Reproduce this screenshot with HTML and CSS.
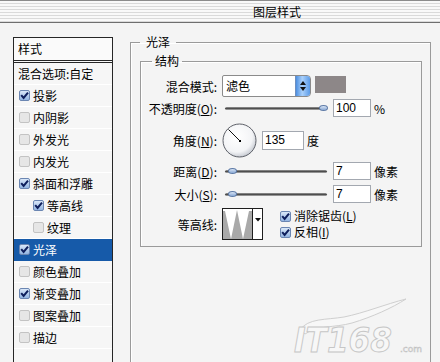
FILE: index.html
```html
<!DOCTYPE html>
<html lang="zh-CN">
<head>
    <meta charset="UTF-8">
    <title>图层样式</title>
    <link rel="stylesheet" href="styles.css">
</head>
<body>
    <div class="titlebar"><span class="title">图层样式</span></div>

    <div class="main">
        <!-- effect list -->
        <div class="list">
            <div class="list-head">样式</div>
            <div class="list-row">混合选项:自定</div>
            <div class="list-row"><span class="cb on"><svg viewBox="0 0 11 11"><path d="M2.2 5.2 L4.6 8 L9 2.6"/></svg></span>投影</div>
            <div class="list-row"><span class="cb"></span>内阴影</div>
            <div class="list-row"><span class="cb"></span>外发光</div>
            <div class="list-row"><span class="cb"></span>内发光</div>
            <div class="list-row"><span class="cb on"><svg viewBox="0 0 11 11"><path d="M2.2 5.2 L4.6 8 L9 2.6"/></svg></span>斜面和浮雕</div>
            <div class="list-row sub"><span class="cb on"><svg viewBox="0 0 11 11"><path d="M2.2 5.2 L4.6 8 L9 2.6"/></svg></span>等高线</div>
            <div class="list-row sub"><span class="cb"></span>纹理</div>
            <div class="list-row selected"><span class="cb on"><svg viewBox="0 0 11 11"><path d="M2.2 5.2 L4.6 8 L9 2.6"/></svg></span>光泽</div>
            <div class="list-row"><span class="cb"></span>颜色叠加</div>
            <div class="list-row"><span class="cb on"><svg viewBox="0 0 11 11"><path d="M2.2 5.2 L4.6 8 L9 2.6"/></svg></span>渐变叠加</div>
            <div class="list-row"><span class="cb"></span>图案叠加</div>
            <div class="list-row"><span class="cb"></span>描边</div>
        </div>

        <fieldset class="group outer">
            <legend>光泽</legend>
            <fieldset class="group inner">
                <legend>结构</legend>

                <div class="row row-mode">
                    <span class="lbl">混合模式:</span>
                    <div class="select">
                        <span class="select-val">滤色</span>
                        <span class="spin">
                            <svg width="8" height="14" viewBox="0 0 8 14"><path d="M4 2 L7 6 L1 6 Z M4 12 L7 8 L1 8 Z" fill="#111"/></svg>
                        </span>
                    </div>
                    <span class="swatch"></span>
                </div>

                <div class="row row-opacity">
                    <span class="lbl">不透明度(<u>O</u>):</span>
                    <div class="slider"><span class="thumb" style="left: 98px;"></span></div>
                    <span class="num">100</span>
                    <span class="unit">%</span>
                </div>

                <div class="row row-angle">
                    <span class="lbl">角度(<u>N</u>):</span>
                    <svg class="dial" width="35" height="35" viewBox="0 0 35 35">
                        <defs>
                            <radialGradient id="dialfill" cx="42%" cy="38%" r="65%">
                                <stop offset="0" stop-color="#ffffff"/>
                                <stop offset="0.72" stop-color="#f3f4f6"/>
                                <stop offset="1" stop-color="#c3c7cf"/>
                            </radialGradient>
                        </defs>
                        <circle cx="17.5" cy="17.5" r="16.5" fill="url(#dialfill)" stroke="#5d6068" stroke-width="1"/>
                        <line x1="18" y1="18" x2="6.5" y2="6.5" stroke="#111" stroke-width="1"/>
                        <rect x="17" y="17" width="2" height="2" fill="#000"/>
                    </svg>
                    <span class="num num-angle">135</span>
                    <span class="unit">度</span>
                </div>

                <div class="row row-dist">
                    <span class="lbl">距离(<u>D</u>):</span>
                    <div class="slider"><span class="thumb" style="left: 7px;"></span></div>
                    <span class="num">7</span>
                    <span class="unit">像素</span>
                </div>

                <div class="row row-size">
                    <span class="lbl">大小(<u>S</u>):</span>
                    <div class="slider"><span class="thumb" style="left: 7px;"></span></div>
                    <span class="num">7</span>
                    <span class="unit">像素</span>
                </div>

                <div class="row row-contour">
                    <span class="lbl">等高线:</span>
                    <div class="contour">
                        <svg class="curve" width="29" height="30" viewBox="0 0 29 30">
                            <rect width="29" height="30" fill="#fff"/>
                            <path d="M0 30 L0 2 L2 2 L8 30 L14 1 L20 30 L26 2 L29 2 L29 30 Z" fill="#a9a9a9"/>
                        </svg>
                        <span class="contour-arrow">
                            <svg width="6" height="4" viewBox="0 0 6 4"><path d="M0 0 L6 0 L3 3.5 Z" fill="#111"/></svg>
                        </span>
                    </div>
                    <div class="checks">
                        <div class="check"><span class="cb on"><svg viewBox="0 0 11 11"><path d="M2.2 5.2 L4.6 8 L9 2.6"/></svg></span>消除锯齿(<u>L</u>)</div>
                        <div class="check"><span class="cb on"><svg viewBox="0 0 11 11"><path d="M2.2 5.2 L4.6 8 L9 2.6"/></svg></span>反相(<u>I</u>)</div>
                    </div>
                </div>
            </fieldset>
        </fieldset>
    </div>

    <!-- watermark -->
    <svg class="watermark" width="142" height="60" viewBox="0 0 142 60">
        <path d="M10 32 C18 20 36 22 54 19 C74 15 96 6 116 1 C102 10 82 19 62 25 C44 30 28 27 15 36 Z" fill="#f7f7f7" stroke="#cfcfcf" stroke-width="1"/>
        <text x="4" y="54" class="wm-big" textLength="98" lengthAdjust="spacingAndGlyphs">IT168</text>
        <text x="110" y="54" class="wm-small">.com</text>
    </svg>
</body>
</html>
```

FILE: styles.css
```css
body {
    margin: 0;
    width: 440px;
    height: 362px;
    overflow: hidden;
    position: relative;
    background: #f4f4f4;
    font-family: "Noto Sans CJK SC", "Liberation Sans", sans-serif;
    font-size: 12px;
    color: #000;
}
.titlebar {
    height: 21px;
    line-height: 21px;
    padding-left: 253px;
    border-top: 1px solid #8c8c8c;
    border-bottom: 1px solid #6e6e6e;
    background: repeating-linear-gradient(to bottom, #f9f9f9 0, #f9f9f9 2px, #dadada 2px, #dadada 3px);
}
.main {
    display: flex;
    align-items: flex-start;
    padding: 11px 0 0 13px;
}

/* effect list */
.list {
    width: 98px;
    height: 340px;
    margin-top: 3px;
    border: 1px solid #262626;
    background: #f6f6f6;
    flex: none;
}
.list-head {
    height: 22px;
    line-height: 22px;
    padding-left: 4px;
    background: #fafafa;
    border-bottom: 3px double #262626;
}
.list-row {
    display: flex;
    align-items: center;
    height: 21px;
    padding-left: 5px;
    border-bottom: 1px solid #ffffff;
    white-space: nowrap;
}
.list-row:nth-child(2) {
    padding-left: 4px;
}
.list-row.sub {
    padding-left: 19px;
}
.list-row.selected {
    background: #165aa9;
    color: #fff;
    border-bottom-color: #165aa9;
}
.cb {
    width: 9px;
    height: 9px;
    margin-right: 3px;
    border: 1px solid #c3c3c3;
    border-radius: 2px;
    background: #e6e6e6;
    flex: none;
    display: flex;
}
.cb.on {
    border-color: #6b86b2;
    background: linear-gradient(to bottom, #d9e7f8, #93b5e2);
}
.cb svg {
    width: 11px;
    height: 11px;
    margin: -1px;
    fill: none;
    stroke: #0e1f5c;
    stroke-width: 2;
}

/* group boxes */
.group {
    margin: 0;
    padding: 0;
    border: 1px solid #9a9a9a;
    box-shadow: inset 1px 1px 0 #ffffff;
    min-width: 0;
}
.group legend {
    line-height: 16px;
    height: 16px;
}
.outer {
    box-sizing: border-box;
    width: 301px;
    height: 340px;
    margin-left: 17px;
}
.outer > legend {
    margin-left: 9px;
    padding: 0 6px;
}
.inner {
    margin: 3px 8px 0 9px;
    padding: 6px 0 6px 0;
}
.inner > legend {
    margin-left: 11px;
    padding: 0 3px;
}

/* rows */
.row {
    display: flex;
    align-items: center;
}
.lbl {
    width: 76px;
    margin-right: 5px;
    text-align: right;
    flex: none;
    white-space: nowrap;
}
.row-mode {
    height: 22px;
}
.row-opacity {
    height: 18px;
    margin-top: 2px;
}
.row-angle {
    height: 35px;
    margin-top: 6px;
}
.row-dist {
    height: 18px;
    margin-top: 4px;
}
.row-size {
    height: 18px;
    margin-top: 5px;
}
.row-contour {
    height: 32px;
    margin-top: 5px;
}

.select {
    display: flex;
    box-sizing: border-box;
    width: 89px;
    height: 22px;
    border: 1px solid #8b8b8b;
    border-radius: 2px 4px 4px 2px;
    background: #fff;
}
.select-val {
    flex: 1;
    line-height: 20px;
    padding-left: 3px;
}
.spin {
    width: 14px;
    display: flex;
    align-items: center;
    justify-content: center;
    border-left: 1px solid #6d8fc0;
    border-radius: 0 3px 3px 0;
    background: linear-gradient(to right, #4d8fe0, #a9d0fb 45%, #5b9ae6);
}
.swatch {
    width: 31px;
    height: 17px;
    margin-left: 4px;
    background: #8d8788;
    align-self: flex-start;
    margin-top: 1px;
}

.slider {
    position: relative;
    width: 102px;
    height: 3px;
    margin-left: 3px;
    border-radius: 2px;
    background: linear-gradient(to bottom, #9a9a9a, #4e4e4e 50%, #b5b5b5);
}
.thumb {
    position: absolute;
    top: -2px;
    width: 9px;
    height: 6px;
    margin-left: -4px;
    border-radius: 50%;
    border: 1px solid #5c79a6;
    box-sizing: border-box;
    background: linear-gradient(to bottom, #dbe7f7, #88a7d3);
}
.num {
    box-sizing: border-box;
    width: 38px;
    height: 18px;
    margin-left: 6px;
    padding-left: 2px;
    line-height: 16px;
    border: 1px solid #a3a8b0;
    background: #fff;
    font-family: "Liberation Sans", Arial, sans-serif;
}
.num-angle {
    width: 42px;
    height: 19px;
    margin-left: 5px;
    line-height: 17px;
}
.unit {
    margin-left: 3px;
}
.dial {
    flex: none;
}

.contour {
    display: flex;
    width: 41px;
    height: 32px;
    box-sizing: border-box;
    border: 1px solid #1e1e1e;
    background: #fff;
}
.curve {
    display: block;
}
.contour-arrow {
    flex: 1;
    display: flex;
    justify-content: center;
    padding-top: 9px;
    border-left: 1px solid #1e1e1e;
}
.checks {
    margin-left: 17px;
}
.check {
    display: flex;
    align-items: center;
    height: 16px;
    line-height: 16px;
}

.watermark {
    position: absolute;
    left: 290px;
    top: 298px;
    overflow: visible;
}
.wm-big {
    font-family: "DejaVu Sans", sans-serif;
    font-style: italic;
    font-weight: bold;
    font-size: 34px;
    fill: #f7f7f7;
    stroke: #c6c6c6;
    stroke-width: 1;
}
.wm-small {
    font-family: "DejaVu Sans", sans-serif;
    font-size: 9px;
    fill: #f2f2f2;
    stroke: #bdbdbd;
    stroke-width: 0.5;
}
```
